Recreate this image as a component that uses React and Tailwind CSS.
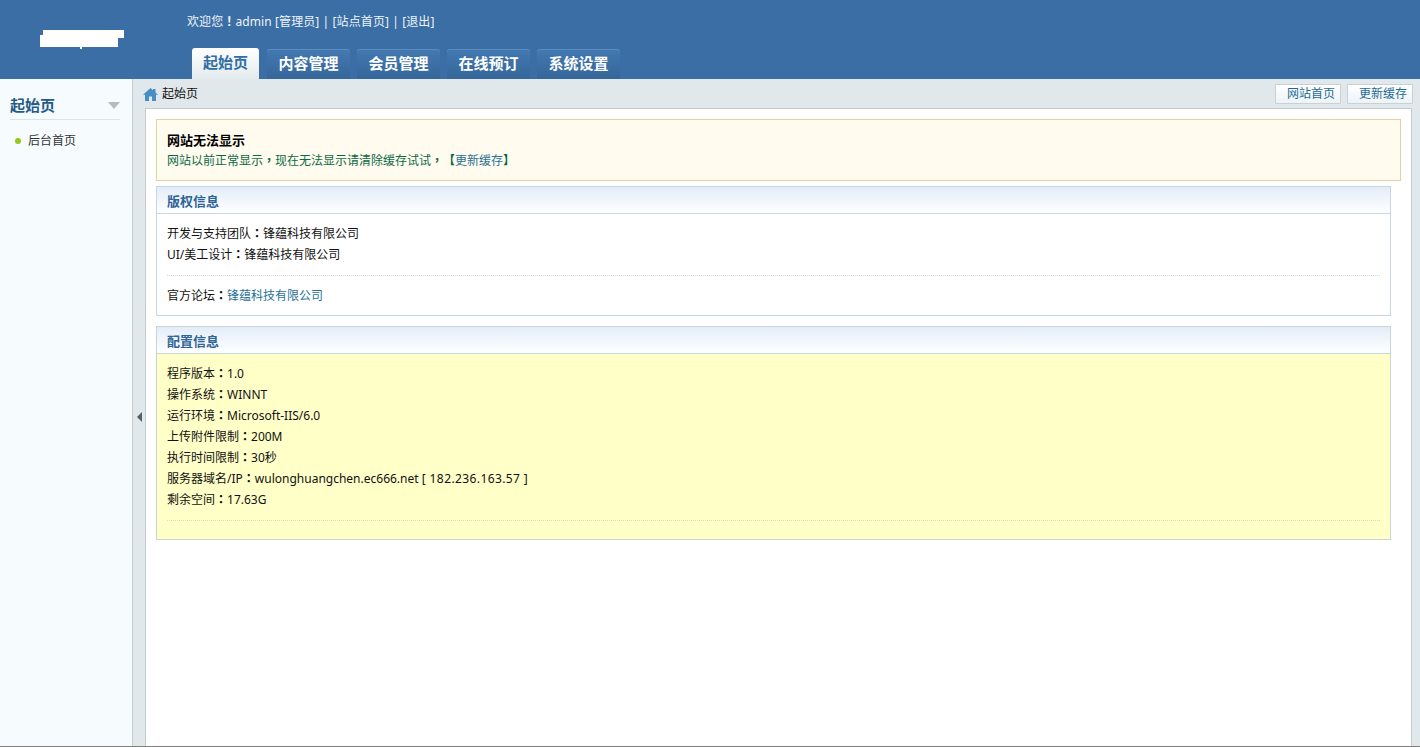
import React from 'react';

const font = { fontFamily: '"Noto Sans", "Noto Sans CJK SC", sans-serif' };

const tabs = ['内容管理', '会员管理', '在线预订', '系统设置'];

const config = [
  ['程序版本', '1.0'],
  ['操作系统', 'WINNT'],
  ['运行环境', 'Microsoft-IIS/6.0'],
  ['上传附件限制', '200M'],
  ['执行时间限制', '30秒'],
  ['服务器域名/IP', <>wulonghuangchen.ec666.net <span className="tracking-[0.4px]">[ 182.236.163.57 ]</span></>],
  ['剩余空间', '17.63G'],
];

// punctuation sits in the middle of its cell in the reference, TC font does that
function Punct({ children }) {
  return <span className="font-['Noto_Sans_CJK_TC'] font-bold leading-none">{children}</span>;
}

function PanelTitle({ children }) {
  return (
    <div className="h-[27px] leading-[29px] pl-[10px] text-[13px] font-bold text-[#2f6496] bg-gradient-to-b from-[#e3edf8] to-white border-b border-[#c6d6e2]">
      {children}
    </div>
  );
}

function TopButton({ children }) {
  return (
    <div className="w-[66px] h-[20px] leading-[17px] text-right pr-[5px] text-[#1f6a94] bg-gradient-to-b from-white to-[#edf3f6] border border-[#c8d2d6] rounded-[1px]">
      {children}
    </div>
  );
}

export default function App() {
  return (
    <div className="h-[747px] w-[1420px] overflow-hidden flex flex-col text-[12px] text-[#111] bg-white border-b border-[#808080] [text-spacing-trim:space-all]" style={font}>
      {/* top header */}
      <header className="h-[79px] shrink-0 flex bg-[#3b6ea5]">
        <div className="w-[187px] shrink-0 pt-[30px] pl-[40px]">
          <svg width="85" height="19" viewBox="0 0 85 19">
            <path d="M3 0H84V8H78V17H42V19H40V17H0V5H3Z" fill="#fff" />
          </svg>
        </div>
        <div className="flex-1 flex flex-col">
          <div className="h-[48px] pt-[14px] leading-[16px] text-[#eef4fa] whitespace-pre tracking-[0.1px]">
            欢迎您<Punct>！</Punct>admin [管理员] | [站点首页] | [退出]
          </div>
          <div className="flex items-end gap-[7px] pl-[5px] text-[15px] font-bold">
            <div className="w-[67px] h-[31px] mr-[1px] leading-[29px] text-center text-[#2f6ea5] bg-gradient-to-b from-white to-[#e3eaee] rounded-t-[3px]">
              起始页
            </div>
            {tabs.map((tab) => (
              <div
                key={tab}
                className="w-[83px] h-[30px] leading-[28px] text-center text-white bg-gradient-to-b from-[#4379b2] to-[#356699] rounded-t-[3px] shadow-[inset_0_1px_0_#5a8cc0]"
              >
                {tab}
              </div>
            ))}
          </div>
        </div>
      </header>

      <div className="flex-1 flex min-h-0 bg-[#e1e8eb]">
        {/* left menu */}
        <aside className="w-[133px] shrink-0 bg-[#f6fbfd] border-r border-[#c4ccd0] pl-[10px] pr-[12px]">
          <div className="h-[41px] pt-[13px] flex items-center justify-between border-b border-[#dde4e7]">
            <span className="text-[15px] font-bold text-[#245a86]">起始页</span>
            <span className="w-0 h-0 border-x-[6px] border-x-transparent border-t-[7px] border-t-[#b3bcc0]" />
          </div>
          <div className="mt-[11px] flex items-center h-[20px]">
            <span className="w-[6px] h-[6px] ml-[5px] rounded-full bg-[#93c81e]" />
            <span className="ml-[7px] text-[#333]">后台首页</span>
          </div>
        </aside>

        {/* collapse handle */}
        <div className="w-[12px] shrink-0 flex items-center justify-center pt-[9px]">
          <span className="w-0 h-0 border-y-[5px] border-y-transparent border-r-[5px] border-r-[#555f66]" />
        </div>

        <div className="flex-1 min-w-0 flex flex-col">
          {/* breadcrumb */}
          <div className="h-[29px] shrink-0 flex items-center justify-between pr-[7px]">
            <div className="flex items-center gap-[4px] pt-[1px] text-[#111]">
              <svg width="15" height="13" viewBox="0 0 15 13" className="-ml-[2px]">
                <path d="M7.5 0L10 2.3V1H12.5V4.5L15 6.8H13V13H9V8.5H6V13H2V6.8H0Z" fill="#4a8fc4" />
              </svg>
              <span>起始页</span>
            </div>
            <div className="flex gap-[6px]">
              <TopButton>网站首页</TopButton>
              <TopButton>更新缓存</TopButton>
            </div>
          </div>

          {/* main content */}
          <main className="flex-1 mr-[8px] bg-white border-t border-l border-r border-[#c4ccd0] pt-[10px] pl-[10px]">
            <div className="h-[62px] mr-[10px] bg-[#fffbee] border border-[#e8cfa4] pl-[10px] pt-[12px]">
              <div className="text-[13px] font-bold text-[#000] leading-[16px]">网站无法显示</div>
              <div className="mt-[5px] leading-[16px] text-[#0b6a45]">
                网站以前正常显示<Punct>，</Punct>现在无法显示请清除缓存试试<Punct>，</Punct>
                <Punct>【</Punct>
                <span className="text-[#2a7196]">更新缓存</span>
                <Punct>】</Punct>
              </div>
            </div>

            <section className="mt-[5px] mr-[20px] h-[130px] border border-[#c6d6e2]">
              <PanelTitle>版权信息</PanelTitle>
              <div className="px-[10px] pt-[9px] leading-[21px]">
                <div>开发与支持团队<Punct>：</Punct>锋蕴科技有限公司</div>
                <div>UI/美工设计<Punct>：</Punct>锋蕴科技有限公司</div>
                <div className="mt-[10px] mb-[9px] border-t border-dotted border-[#d8d8d8]" />
                <div>
                  官方论坛<Punct>：</Punct><span className="text-[#2a7196]">锋蕴科技有限公司</span>
                </div>
              </div>
            </section>

            <section className="mt-[10px] mr-[20px] h-[214px] flex flex-col border border-[#c9d5d5]">
              <PanelTitle>配置信息</PanelTitle>
              <div className="flex-1 bg-[#ffffc8] px-[10px] pt-[9px] leading-[21px]">
                {config.map(([label, value]) => (
                  <div key={label}>
                    {label}<Punct>：</Punct>{value}
                  </div>
                ))}
                <div className="mt-[10px] border-t border-dotted border-[#dcdcb4]" />
              </div>
            </section>
          </main>
        </div>
      </div>
    </div>
  );
}
